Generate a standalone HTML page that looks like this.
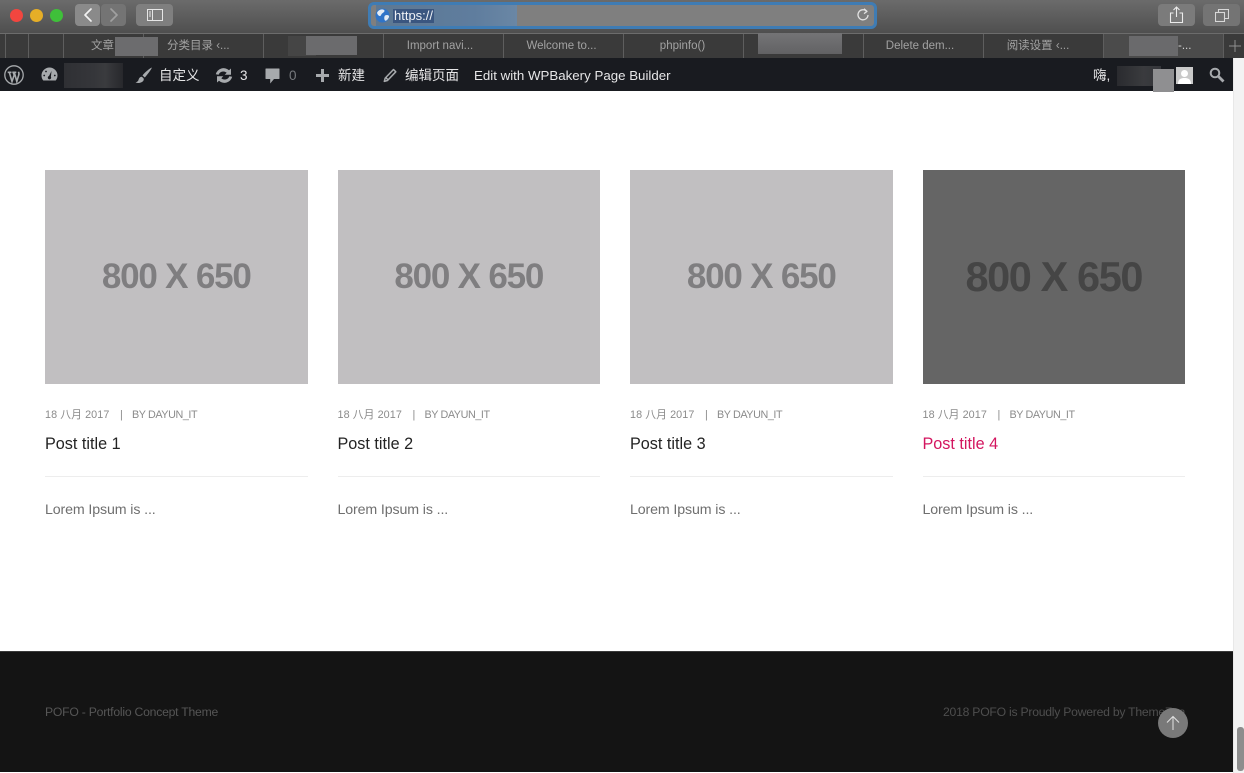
<!DOCTYPE html>
<html>
<head>
<meta charset="utf-8">
<style>
html,body{margin:0;padding:0;width:1244px;height:773px;overflow:hidden;background:#fff}
body{position:relative;font-family:"Liberation Sans","Noto Sans CJK SC",sans-serif}
.a{position:absolute}
.t{position:absolute;white-space:nowrap}
.btn{position:absolute;background:#7d7d7d;border-radius:4px}
.tab{position:absolute;top:34px;height:24px;line-height:24px;text-align:center;color:#a2a2a2;font-size:11.5px;white-space:nowrap}
.sep{position:absolute;top:34px;width:1px;height:24px;background:#5e5e5e}
.wp{position:absolute;top:58px;height:33px;line-height:35px;color:#e6e6e7;font-size:13.5px;white-space:nowrap}
.img{position:absolute;top:170px;width:262.500px;height:213.500px;background:#c1bfc1}
.ph{position:absolute;left:0;right:0;top:84px;text-align:center;font-weight:bold;font-size:35px;line-height:46px;color:#7f7e80;letter-spacing:-1.2px}
.m{position:absolute;top:408px;font-size:10.800px;line-height:15px;color:#8b8b8b;white-space:nowrap}
.d{letter-spacing:.08px}
.by{letter-spacing:-.42px}
.title{position:absolute;top:434px;font-size:16.200px;line-height:20px;color:#232323;white-space:nowrap}
.hr{position:absolute;top:476px;width:262.500px;height:1px;background:#ededed}
.ex{position:absolute;top:501px;font-size:14.200px;line-height:19px;color:#6f6f6f;white-space:nowrap;letter-spacing:-.12px}
</style>
</head>
<body>
<!-- Browser toolbar -->
<div class="a" style="left:0;top:0;width:1244px;height:33px;background:linear-gradient(#6b6b6b,#4f4f4f)"></div>
<div class="a" style="left:0;top:33px;width:1244px;height:1px;background:#6c6c6c"></div>
<div class="a" style="left:10px;top:9px;width:13px;height:13px;border-radius:50%;background:#f2463f"></div>
<div class="a" style="left:30px;top:9px;width:13px;height:13px;border-radius:50%;background:#e6ae27"></div>
<div class="a" style="left:50px;top:9px;width:13px;height:13px;border-radius:50%;background:#3fc03a"></div>
<div class="btn" style="left:75px;top:4px;width:25px;height:22px;background:#8a8a8a"></div>
<div class="btn" style="left:101px;top:4px;width:25px;height:22px;background:#747474"></div>
<svg class="a" style="left:75px;top:4px" width="51" height="22" fill="none" stroke-width="1.7" stroke-linecap="round" stroke-linejoin="round"><path d="M16 5l-6 6 6 6" stroke="#f2f2f2"/><path d="M36 5l6 6-6 6" stroke="#a0a0a0"/></svg>
<div class="btn" style="left:136px;top:4px;width:37px;height:22px;background:#7f7f7f"></div>
<svg class="a" style="left:147px;top:9px" width="16" height="12" fill="none" stroke="#e6e6e6" stroke-width="1"><rect x=".5" y=".5" width="15" height="11"/><path d="M5.500 .5v11M2 3h2M2 5h2M2 7h2"/></svg>
<!-- Address bar -->
<div class="a" style="left:368px;top:2px;width:509px;height:27px;box-sizing:border-box;border:3px solid #3f7cb4;border-radius:6px;background:#7f7f7f;overflow:hidden">
  <div class="a" style="left:5px;top:0;width:141px;height:21px;background:linear-gradient(90deg,#5d7893,#5f7d9e 70%,#6a87a5)"></div>
</div>
<svg class="a" style="left:375px;top:8px" width="15" height="15"><circle cx="7.500" cy="7.500" r="7" fill="#2f74c8"/><path d="M2 5c1-3 5-4.500 7-3 1.500 1-.5 2.500-2 3.500-1 1-1 3-2.500 2.500C3 7.500 2.500 6 2 5zM10 7.500c2-1 4.500-.5 4 1.500-.5 2-3 4.500-4 3.500-1-1-1-4 0-5z" fill="#e4ebf3"/></svg>
<div class="a" style="left:393px;top:9px;width:41px;height:14px;background:#3a5680"></div>
<div class="t" style="left:394px;top:8px;font-size:13px;line-height:16px;color:#eef1f5">https://</div>
<svg class="a" style="left:856px;top:8px" width="14" height="15" fill="none" stroke="#e2e2e2" stroke-width="1.300"><path d="M10.500 3.200A5 5 0 1 0 12 7"/><path d="M8 .8l3 2.600-3 2.200" stroke-linejoin="round"/></svg>
<div class="btn" style="left:1158px;top:4px;width:37px;height:22px;background:#7b7b7b"></div>
<div class="btn" style="left:1203px;top:4px;width:37px;height:22px;background:#747474"></div>
<svg class="a" style="left:1169px;top:6px" width="15" height="18" fill="none" stroke="#ececec" stroke-width="1.100"><path d="M7.500 11V1.500M4.500 4l3-3 3 3M4.500 7H1.500v9.500h12V7h-3"/></svg>
<svg class="a" style="left:1215px;top:9px" width="14" height="13" fill="none" stroke="#d8d8d8" stroke-width="1.100"><rect x=".5" y="3.500" width="9" height="9"/><path d="M3.500 3.500v-3h10v9h-4"/></svg>

<!-- Tab bar -->
<div class="a" style="left:0;top:34px;width:1244px;height:24px;background:#3a3a3a"></div>
<div class="a" style="left:1103px;top:34px;width:120px;height:24px;background:#4b4b4b"></div>
<div class="sep" style="left:5px"></div><div class="sep" style="left:28px"></div><div class="sep" style="left:63px"></div><div class="sep" style="left:143px"></div><div class="sep" style="left:263px"></div><div class="sep" style="left:383px"></div><div class="sep" style="left:503px"></div><div class="sep" style="left:623px"></div><div class="sep" style="left:743px"></div><div class="sep" style="left:863px"></div><div class="sep" style="left:983px"></div><div class="sep" style="left:1103px"></div><div class="sep" style="left:1223px"></div>
<div class="tab" style="left:91px">文章</div>
<div class="a" style="left:115px;top:37px;width:43px;height:19px;background:#6c6c6e"></div>
<div class="tab" style="left:167px">分类目录 ‹...</div>
<div class="a" style="left:288px;top:36px;width:28px;height:20px;background:#454545"></div>
<div class="a" style="left:306px;top:36px;width:51px;height:19px;background:#6b6b6d"></div>
<div class="tab" style="left:383px;width:114px">Import navi...</div>
<div class="tab" style="left:503px;width:117px">Welcome to...</div>
<div class="tab" style="left:623px;width:119px">phpinfo()</div>
<div class="a" style="left:758px;top:33px;width:84px;height:21px;background:linear-gradient(#747476,#626264)"></div>
<div class="tab" style="left:863px;width:114px">Delete dem...</div>
<div class="tab" style="left:983px;width:110px">阅读设置 ‹...</div>
<div class="a" style="left:1129px;top:36px;width:49px;height:20px;background:#6a6a6c"></div>
<div class="tab" style="left:1178px;color:#d5d5d5">-...</div>
<svg class="a" style="left:1228px;top:39px" width="14" height="14" stroke="#8f8f8f" stroke-width="1"><path d="M7 1v12M1 7h12"/></svg>

<!-- WP admin bar -->
<div class="a" style="left:0;top:58px;width:1233px;height:33px;background:#191b20"></div>
<svg class="a" style="left:4px;top:65px" width="20" height="20" fill="none" stroke="#a7aaad"><circle cx="10" cy="10" r="9.200" stroke-width="1.300"/><path d="M3.700 7.300h3.800M5.300 7.300L8 16.500l2.200-6.500-1-2.700M8.300 7.300h4M10.300 7.300L12.800 16.500l1.900-6.300c.5-1.500.2-2.600-.3-3.400" stroke-width="1.600"/></svg>
<svg class="a" style="left:41px;top:66px" width="17" height="16"><path d="M8.500 1.500A8 8 0 0 0 .5 9.500c0 2 .7 3.700 1.800 5h12.400a8 8 0 0 0 1.800-5 8 8 0 0 0-8-8z" fill="#a7aaad"/><path d="M10.500 5L8 10a1.700 1.700 0 1 0 1.900.7z" fill="#191b20"/><circle cx="3.200" cy="9.500" r=".9" fill="#191b20"/><circle cx="5" cy="5.500" r=".9" fill="#191b20"/><circle cx="13.800" cy="9.500" r=".9" fill="#191b20"/></svg>
<div class="a" style="left:64px;top:63px;width:59px;height:25px;background:linear-gradient(90deg,#2f3034,#35363a 50%,#3a3b3e 70%,#27282c)"></div>
<svg class="a" style="left:135px;top:67px" width="18" height="17"><path d="M17 .5c-2 .7-7 4.500-9.500 8l2.300 2C12 8 16 3 17 .5zM6.800 9.800C4.500 10 4 11.500 3.500 13 3.100 14.200 2 15 .5 15.500c2.500 1 6.500.5 8-2 .5-1 .3-2-.2-2.500z" fill="#a7aaad"/></svg>
<div class="wp" style="left:159px">自定义</div>
<svg class="a" style="left:215px;top:67px" width="18" height="17" fill="#a7aaad"><path d="M.8 7.200A8 8 0 0 1 14 3.300l2-1.800v6.300H9.700l2-2A5 5 0 0 0 3.600 7.800zM17.200 9.800A8 8 0 0 1 4 13.700l-2 1.800V9.200h6.300l-2 2a5 5 0 0 0 8.100-2z"/></svg>
<div class="wp" style="left:240px">3</div>
<svg class="a" style="left:265px;top:68px" width="15" height="16"><path d="M1 .5h13a.5.5 0 0 1 .5.5v9.500a.5.500 0 0 1-.5.5H9l-3.800 4.500V11H1a.5.5 0 0 1-.5-.5V1A.5.5 0 0 1 1 .5z" fill="#a7aaad"/></svg>
<div class="wp" style="left:289px;color:#777a7e">0</div>
<svg class="a" style="left:316px;top:69px" width="13" height="13"><path d="M5 0h3v5h5v3H8v5H5V8H0V5h5z" fill="#a7aaad"/></svg>
<div class="wp" style="left:338px">新建</div>
<svg class="a" style="left:383px;top:68px" width="14" height="15" fill="none" stroke="#a7aaad" stroke-width="1.500"><path d="M10.500 1.500l2.300 2.300-8.300 8.700-3.200.9.900-3.300z" stroke-linejoin="round"/><path d="M3 9.800l2.200 2.200"/></svg>
<div class="wp" style="left:405px">编辑页面</div>
<div class="wp" style="left:474px;font-size:13.300px">Edit with WPBakery Page Builder</div>
<div class="wp" style="left:1093px">嗨,</div>
<div class="a" style="left:1117px;top:66px;width:44px;height:20px;background:linear-gradient(90deg,#2a2b2f,#3a3b3e 60%,#34353a)"></div>
<div class="a" style="left:1153px;top:69px;width:21px;height:23px;background:#8f8f91"></div>
<div class="a" style="left:1176px;top:67px;width:17px;height:17px;background:#c9c9c9;overflow:hidden">
<svg width="17" height="17"><circle cx="8.500" cy="6.500" r="3.500" fill="#fff"/><path d="M2 17c0-5 3-6 6.500-6s6.500 1 6.500 6z" fill="#fff"/></svg>
</div>
<svg class="a" style="left:1209px;top:67px" width="16" height="16" fill="none" stroke="#a7aaad"><circle cx="6" cy="6" r="4.300" stroke-width="2"/><path d="M9.500 9.500l5 5" stroke-width="2.800"/></svg>

<!-- Scrollbar -->
<div class="a" style="left:1233px;top:58px;width:11px;height:715px;background:#f3f3f3;border-left:1px solid #e8e8e8;box-sizing:border-box"></div>
<div class="a" style="left:1237px;top:727px;width:7px;height:44px;border-radius:3px;background:#8d8d8d"></div>

<!-- Cards -->
<div class="img" style="left:45px"><div class="ph">800 X 650</div></div>
<div class="img" style="left:337.500px"><div class="ph">800 X 650</div></div>
<div class="img" style="left:630px"><div class="ph">800 X 650</div></div>
<div class="img" style="left:922.500px;background:#656565"><div class="ph" style="color:#454545;font-size:41.500px;letter-spacing:-1.400px">800 X 650</div></div>

<div class="m d" style="left:45px">18 八月 2017</div><div class="m" style="left:120px">|</div><div class="m by" style="left:132px">BY DAYUN_IT</div>
<div class="m d" style="left:337.500px">18 八月 2017</div><div class="m" style="left:412.500px">|</div><div class="m by" style="left:424.500px">BY DAYUN_IT</div>
<div class="m d" style="left:630px">18 八月 2017</div><div class="m" style="left:705px">|</div><div class="m by" style="left:717px">BY DAYUN_IT</div>
<div class="m d" style="left:922.500px">18 八月 2017</div><div class="m" style="left:997.500px">|</div><div class="m by" style="left:1009.500px">BY DAYUN_IT</div>

<div class="title" style="left:45px">Post title 1</div>
<div class="title" style="left:337.500px">Post title 2</div>
<div class="title" style="left:630px">Post title 3</div>
<div class="title" style="left:922.500px;color:#d3155f">Post title 4</div>

<div class="hr" style="left:45px"></div>
<div class="hr" style="left:337.500px"></div>
<div class="hr" style="left:630px"></div>
<div class="hr" style="left:922.500px"></div>

<div class="ex" style="left:45px">Lorem Ipsum is ...</div>
<div class="ex" style="left:337.500px">Lorem Ipsum is ...</div>
<div class="ex" style="left:630px">Lorem Ipsum is ...</div>
<div class="ex" style="left:922.500px">Lorem Ipsum is ...</div>

<!-- Footer -->
<div class="a" style="left:0;top:651px;width:1233px;height:121px;background:#141414;border-top:1px solid #3a3a3a;box-sizing:border-box"></div>
<div class="t" style="left:45px;top:704px;font-size:12.200px;line-height:16px;color:#565656;letter-spacing:-.23px">POFO - Portfolio Concept Theme</div>
<div class="t" style="left:943px;top:704px;font-size:12.200px;line-height:16px;color:#4e4e4e;letter-spacing:-.24px">2018 POFO is Proudly Powered by ThemeZaa</div>
<div class="a" style="left:1158px;top:708px;width:30px;height:30px;border-radius:50%;background:#797979"></div>
<svg class="a" style="left:1165px;top:715px" width="16" height="16" fill="none" stroke="#e2e2e2" stroke-width="1"><path d="M8 15V1.500M2 7.500l6-6 6 6"/></svg>
</body>
</html>
